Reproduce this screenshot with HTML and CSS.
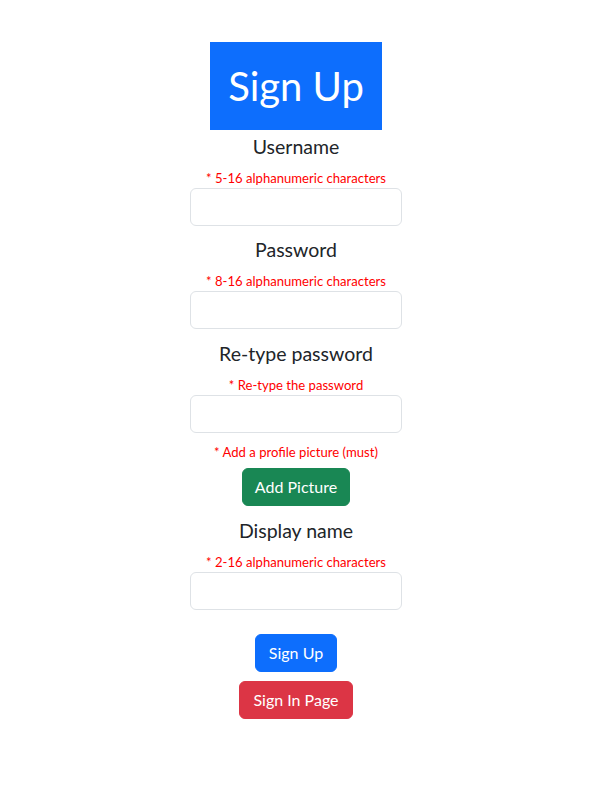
FILE: index.html
```html
<!DOCTYPE html>
<html lang="en">
<head>
<meta charset="utf-8">
<title>Sign Up</title>
<link rel="stylesheet" href="styles.css">
</head>
<body>
<main class="page">
  <h1 class="title">Sign Up</h1>
  <div class="field first">
    <label class="label" for="username">Username</label>
    <span class="hint">* 5-16 alphanumeric characters</span>
    <input class="input" id="username" type="text">
  </div>
  <div class="field">
    <label class="label" for="password">Password</label>
    <span class="hint">* 8-16 alphanumeric characters</span>
    <input class="input" id="password" type="password">
  </div>
  <div class="field">
    <label class="label" for="retype">Re-type password</label>
    <span class="hint">* Re-type the password</span>
    <input class="input" id="retype" type="password">
  </div>
  <div class="field picture">
    <span class="hint">* Add a profile picture (must)</span>
    <button class="btn btn-green" type="button">Add Picture</button>
  </div>
  <div class="field">
    <label class="label" for="display">Display name</label>
    <span class="hint">* 2-16 alphanumeric characters</span>
    <input class="input" id="display" type="text">
  </div>
  <div class="actions">
    <button class="btn btn-blue" type="button">Sign Up</button>
    <button class="btn btn-red" type="button">Sign In Page</button>
  </div>
</main>
</body>
</html>
```
FILE: styles.css
```css
html, body {
  margin: 0;
  background: #fff;
}
body {
  font-family: "Lato", "Liberation Sans", sans-serif;
  color: #212529;
}
.page {
  width: 592px;
  padding-top: 42px;
  display: flex;
  flex-direction: column;
  align-items: center;
}
.title {
  margin: 0;
  width: 172px;
  height: 88px;
  background: #0d6efd;
  color: #fff;
  font-weight: 400;
  font-size: 40px;
  line-height: 48px;
  display: flex;
  align-items: center;
  justify-content: center;
}
.field {
  display: flex;
  flex-direction: column;
  align-items: center;
}
.label {
  margin-top: 12.3px;
  font-size: 19.5px;
  line-height: 24px;
  margin-bottom: 8px;
}
.field.first .label {
  margin-top: 5px;
}
.hint {
  color: #ff0000;
  font-size: 13.1px;
  line-height: 19px;
  padding-top: 2px;
}
.input {
  box-sizing: border-box;
  width: 212px;
  height: 38px;
  margin: 0;
  border: 1px solid #dee2e6;
  border-radius: 6px;
  background: #fff;
  padding: 6px 12px;
  font: inherit;
}
.picture .hint {
  margin-top: 8px;
}
.picture .btn {
  margin-top: 6.5px;
}
.picture + .field .label {
  margin-top: 12.5px;
}
.actions {
  display: flex;
  flex-direction: column;
  align-items: center;
  gap: 9px;
  margin-top: 24px;
}
.btn {
  box-sizing: border-box;
  height: 38px;
  padding: 6px 12px;
  border: 1px solid transparent;
  border-radius: 6px;
  color: #fff;
  font-family: inherit;
  font-size: 16px;
  line-height: 24px;
}
.btn-green { background: #198754; border-color: #198754; }
.btn-blue { background: #0d6efd; border-color: #0d6efd; padding: 6px 13px; }
.btn-red { background: #dc3545; border-color: #dc3545; padding: 6px 13px; }
```
